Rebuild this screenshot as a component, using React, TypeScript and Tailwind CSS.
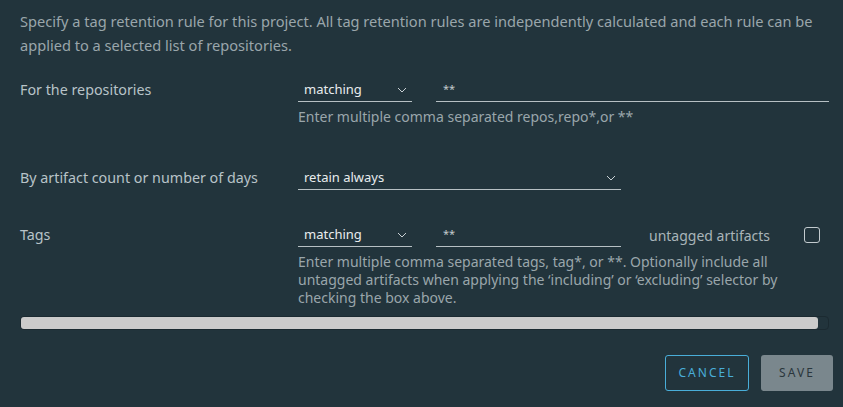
import * as React from "react";

const Chevron: React.FC = () => (
  <svg width="10" height="6" viewBox="0 0 10 6" fill="none" className="shrink-0">
    <path d="M1 1l4 4 4-4" stroke="#c9d1d5" strokeWidth="1" />
  </svg>
);

type SelectProps = { value: string; width: string };

const Select: React.FC<SelectProps> = ({ value, width }) => (
  <div className={`flex h-6 items-center justify-between border-b border-[#b7c0c4] pl-[6px] pr-[5px] text-[13px] text-[#e8ecee] ${width}`}>
    <span>{value}</span>
    <Chevron />
  </div>
);

type InputProps = { value: string; width: string };

const Input: React.FC<InputProps> = ({ value, width }) => (
  <div className={`flex h-6 items-start border-b border-[#b7c0c4] pl-[7px] pt-[3px] text-[11px] text-[#c3cbcf] ${width}`}>
    {value}
  </div>
);

const Helper: React.FC<{ children: React.ReactNode }> = ({ children }) => (
  <p className="mt-[6px] text-[14px] leading-[18px] text-[#9aa6ab]">{children}</p>
);

const Label: React.FC<{ children: React.ReactNode }> = ({ children }) => (
  <div className="w-[278px] text-[14.3px] leading-6 text-[#b8c3c8]">{children}</div>
);

export default function App() {
  return (
    <div
      className="h-[407px] w-[843px] overflow-hidden bg-[#22343c] pl-5 pr-[10px] pt-[9px]"
      style={{ fontFamily: '"Noto Sans", "Open Sans", sans-serif' }}
    >
      <p className="text-[14.6px] leading-6 text-[#9aa6ab]">
        Specify a tag retention rule for this project. All tag retention rules are independently calculated and each rule can be
        <br />
        applied to a selected list of repositories.
      </p>

      <div className="mt-[21px] flex">
        <Label>For the repositories</Label>
        <div className="flex-1 pr-[4px]">
          <div className="flex gap-6">
            <Select value="matching" width="w-[114px]" />
            <Input value="**" width="flex-1" />
          </div>
          <Helper>Enter multiple comma separated repos,repo*,or **</Helper>
        </div>
      </div>

      <div className="mt-[40px] flex">
        <Label>By artifact count or number of days</Label>
        <Select value="retain always" width="w-[323px]" />
      </div>

      <div className="mt-[33px] flex">
        <Label>Tags</Label>
        <div className="w-[523px]">
          <div className="flex items-center">
            <Select value="matching" width="w-[114px]" />
            <Input value="**" width="ml-6 w-[185px]" />
            <span className="ml-[28px] text-[14px] text-[#a9b4b9]">untagged artifacts</span>
            <div className="ml-auto mr-[1px] h-4 w-4 rounded-[3px] border border-[#c3cbcf]" />
          </div>
          <Helper>
            Enter multiple comma separated tags, tag*, or **. Optionally include all
            <br />
            untagged artifacts when applying the ‘including’ or ‘excluding’ selector by
            <br />
            checking the box above.
          </Helper>
        </div>
      </div>

      <div className="mt-[9px] mr-[4px] h-[14px] rounded-[4px] border border-[#1b2a31]">
        <div className="h-full w-[797px] rounded-[3px] bg-[#cbcbcb]" />
      </div>

      <div className="mt-[25px] flex justify-end gap-3">
        <button className="h-9 w-[84px] rounded-[3px] border border-[#49aed9] text-[12px] tracking-[0.17em] text-[#49aed9]">
          CANCEL
        </button>
        <button className="h-9 w-[72px] rounded-[3px] bg-[#7a878d] text-[12px] tracking-[0.17em] text-[#2a363c]">
          SAVE
        </button>
      </div>
    </div>
  );
}
